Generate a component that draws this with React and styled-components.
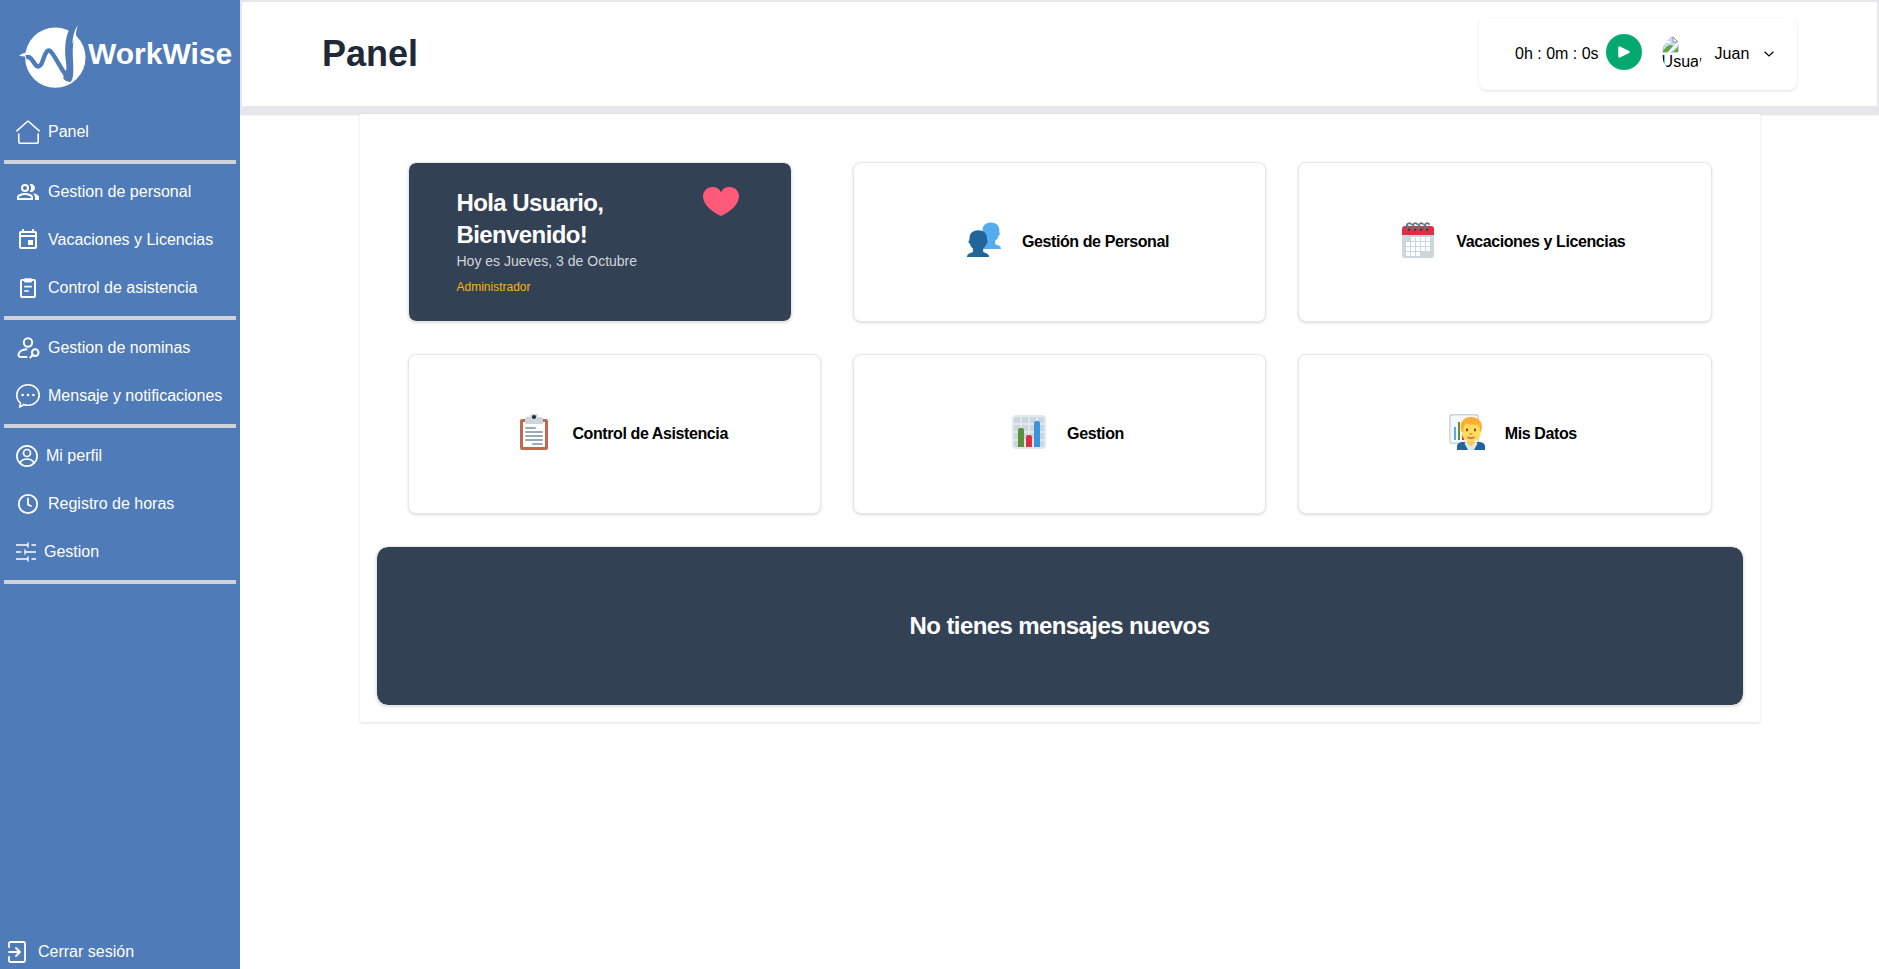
import React from "react";
import styled, { createGlobalStyle, css } from "styled-components";

const BLUE = "#4f7bb8";

const GlobalStyle = createGlobalStyle`
  *, *::before, *::after { box-sizing: border-box; }
  body {
    margin: 0;
    background: #fff;
    color: #000;
    font-family: "Liberation Sans", Arial, sans-serif;
    font-size: 16px;
    line-height: 24px;
    overflow: hidden;
  }
  h1, h2, p { margin: 0; }
  svg { display: block; flex: none; }
`;

const Layout = styled.div`
  display: flex;
  height: 100vh;
`;

const Sidebar = styled.aside`
  display: flex;
  flex-direction: column;
  flex: none;
  width: 240px;
  background: ${BLUE};
  color: #fff;
`;

const Brand = styled.div`
  display: flex;
  align-items: center;
  height: 104px;
  padding: 10px 0 0 18px;
`;

const BrandName = styled.span`
  margin: -6px 0 0 -1px;
  font-size: 30px;
  line-height: 36px;
  font-weight: 700;
`;

const NavGroup = styled.nav`
  margin: 0 4px;
  padding: 4px 0;
  border-bottom: 4px solid #d1d5db;
`;

const NavItem = styled.a`
  display: flex;
  align-items: center;
  gap: 8px;
  height: 48px;
  padding-left: 12px;
  white-space: nowrap;
`;

const Logout = styled.a`
  display: flex;
  align-items: center;
  gap: 12px;
  margin-top: auto;
  padding: 0 0 5px 8px;
`;

const Content = styled.div`
  flex: 1;
  min-width: 0;
`;

const Header = styled.header`
  display: flex;
  align-items: center;
  justify-content: space-between;
  height: 115px;
  padding: 0 80px 0 80px;
  border: 2px solid #e5e7eb;
  border-bottom-width: 9px;
  background: #fff;
  box-shadow: 0 1px 2px rgba(0, 0, 0, 0.05);
`;

const Title = styled.h1`
  color: #1f2937;
  font-size: 36px;
  line-height: 40px;
  font-weight: 700;
`;

const Controls = styled.div`
  display: flex;
  align-items: center;
  width: 318px;
  height: 72px;
  padding-left: 36px;
  border-radius: 8px;
  background: #fff;
  box-shadow: 0 1px 3px rgba(0, 0, 0, 0.12);
`;

const PlayButton = styled.button`
  display: grid;
  place-items: center;
  width: 36px;
  height: 36px;
  margin: 0 20px 4px 7px;
  padding: 0;
  border: 0;
  border-radius: 50%;
  background: #04a96f;
`;

const Avatar = styled.div`
  width: 40px;
  height: 40px;
  margin-right: 13px;
  padding-top: 2px;
  border-radius: 50%;
  overflow: hidden;
  line-height: 18px;
  white-space: nowrap;
`;

const UserName = styled.span`
  width: 49px;
`;

const Board = styled.main`
  position: relative;
  width: 1400px;
  margin: -1px auto 0;
  padding: 16px;
  background: #fff;
  box-shadow: 0 1px 3px rgba(0, 0, 0, 0.13);
`;

const Grid = styled.section`
  display: grid;
  grid-template-columns: repeat(3, 1fr);
  gap: 32px;
  padding: 32px;
`;

const cardFrame = css`
  height: 160px;
  border: 1px solid #e5e7eb;
  border-radius: 8px;
  box-shadow: 0 1px 3px rgba(0, 0, 0, 0.14);
`;

const Card = styled.article`
  ${cardFrame}
  display: flex;
  align-items: center;
  justify-content: center;
  background: #fff;

  & > svg { margin: 0 20px 4px 16px; }
`;

const CardLabel = styled.span`
  font-weight: 700;
  letter-spacing: -0.025em;
`;

const Welcome = styled.article`
  ${cardFrame}
  display: flex;
  justify-content: space-between;
  width: 384px;
  padding: 24px 52px 0 48px;
  background: #334155;
  background-clip: padding-box;
`;

const Greeting = styled.h2`
  color: #fff;
  font-size: 24px;
  line-height: 32px;
  font-weight: 700;
  letter-spacing: -0.025em;
`;

const Today = styled.p`
  color: #d1d5db;
  font-size: 14px;
  line-height: 20px;
`;

const Role = styled.p`
  margin-top: 8px;
  color: #f5b50b;
  font-size: 12px;
  line-height: 16px;
`;

const Messages = styled.section`
  ${cardFrame}
  display: flex;
  align-items: center;
  justify-content: center;
  border-radius: 12px;
  background: #334155;
  background-clip: padding-box;
  color: #fff;
  font-size: 24px;
  line-height: 32px;
  font-weight: 700;
  letter-spacing: -0.025em;
`;

const Line = ({ size = 24, weight = 2, children }) => (
  <svg width={size} height={size} viewBox={`0 0 ${size} ${size}`} fill="none" stroke="#fff"
    strokeWidth={weight} strokeLinecap="round" strokeLinejoin="round">{children}</svg>
);

const Logo = () => (
  <svg width="71" height="68" viewBox="54 68 213 204">
    <circle cx="166" cy="172" r="90.5" fill="#fff" />
    <path d="M57 166Q72 156 92 156L88 172Q73 167 57 166Z" fill="#fff" />
    <path d="M78 171C93 166 97 182 107 194C113 201 120 200 125 189C132 172 138 147 149 151C162 158 184 212 207 236"
      fill="none" stroke={BLUE} strokeWidth="13" />
    <path d="M206 91C194 118 194 154 198 184C200 203 201 212 192 216L190 235Q201 247 211 245C221 239 221 211 219 178C217 140 220 106 232 94L235 68Z" fill={BLUE} />
    <path d="M234 74C222 91 218 110 217 130L229 107C226 98 230 86 234 74Z" fill="#fff" />
  </svg>
);

const HomeIcon = () => (
  <Line weight={1.6}>
    <path d="M.8 10.8L12 1l11.2 9.8M2.8 14v8q0 1.2 1.2 1.2h17q1.2 0 1.2-1.2V14" />
  </Line>
);

const PeopleIcon = () => (
  <svg width="24" height="24" viewBox="0 0 24 24" fill="#fff">
    <path d="M16.67 13.13C18.04 14.06 19 15.32 19 17v3h4v-3c0-2.18-3.57-3.47-6.33-3.87zM15 12c2.21 0 4-1.79 4-4s-1.79-4-4-4c-.47 0-.91.1-1.33.24a5.98 5.98 0 0 1 0 7.52c.42.14.86.24 1.33.24z" />
    <path fillRule="evenodd" d="M9 4a4 4 0 1 0 0 8 4 4 0 0 0 0-8zm0 6a2 2 0 1 1 0-4 2 2 0 0 1 0 4zM9 13c-2.67 0-8 1.34-8 4v3h16v-3c0-2.66-5.33-4-8-4zm6 5H3v-.99C3.2 16.29 6.3 15 9 15s5.8 1.29 6 2v1z" />
  </svg>
);

const EventIcon = () => (
  <svg width="24" height="24" viewBox="0 0 24 24" fill="#fff">
    <path fillRule="evenodd" d="M19 3h-1V1h-2v2H8V1H6v2H5a2 2 0 0 0-2 2v14a2 2 0 0 0 2 2h14a2 2 0 0 0 2-2V5a2 2 0 0 0-2-2zm0 16H5V9h14v10zm0-12H5V5h14v2zM12 12h5v5h-5z" />
  </svg>
);

const ClipboardIcon = () => (
  <Line>
    <rect x="5" y="4" width="14" height="17" rx="1" />
    <path d="M9 3h6v2.6H9zM9 10.7h6M9 15h3" strokeLinecap="square" strokeWidth="1.7" />
  </Line>
);

const PayrollIcon = () => (
  <Line>
    <circle cx="12" cy="6.5" r="4.2" />
    <path d="M10.5 13.2C6.5 13.4 3 15.6 2.5 18.4q-.3 2.6 2.7 2.7h5.3M17 18.8l-2.7 2.7" />
    <circle cx="19.2" cy="16.6" r="3.3" />
  </Line>
);

const ChatIcon = () => (
  <Line weight={1.6}>
    <path d="M4.3 18.8A10.2 10.2 0 0 1 .8 11C.8 5.3 5.8.8 12 .8S23.2 5.3 23.2 11 18.2 21.2 12 21.2q-2.4 0-4.5-.8Q6 22.4 3.5 23.1q1.1-2.2.8-4.3z" />
    <g fill="#fff" stroke="none">
      <circle cx="6.6" cy="11" r="1.35" /><circle cx="12" cy="11" r="1.35" /><circle cx="17.4" cy="11" r="1.35" />
    </g>
  </Line>
);

const ProfileIcon = () => (
  <Line size={22} weight={1.7}>
    <circle cx="11" cy="11" r="10.1" /><circle cx="11" cy="8" r="3.5" />
    <path d="M3.9 17.8C5.6 15.3 8.1 14 11 14s5.4 1.3 7.1 3.8" />
  </Line>
);

const ClockIcon = () => (
  <Line weight={1.8}>
    <circle cx="12" cy="12" r="9.2" /><path d="M12 6.5v6.2l3 1.3" />
  </Line>
);

const TuneIcon = () => (
  <Line size={20} weight={1.4}>
    <path strokeLinecap="butt" d="M0 3h12.5M12 .5v5M15.5 3H20M0 10h5.5M9 7.5v5M9 10h11M0 17h12.5M12 14.5v5M15.5 17H20" />
  </Line>
);

const LogoutIcon = () => (
  <svg width="18" height="24" viewBox="0 0 18 24" fill="none" stroke="#fff" strokeWidth="1.8" strokeLinecap="round" strokeLinejoin="round">
    <path d="M1 7V3.5q0-1.5 1.5-1.5h13Q17 2 17 3.5v17q0 1.5-1.5 1.5h-13Q1 22 1 20.5V17M1 12h10.5M8 8l4 4-4 4" />
  </svg>
);

const BrokenImage = () => (
  <svg width="17" height="17" viewBox="0 0 17 17">
    <path d="M1 1h10l5 5v10H1z" fill="#c6d8f5" stroke="#a6a6a6" />
    <path d="M11 1v5h5z" fill="#fff" stroke="#8e8e8e" />
    <path d="M3.5 7q0-2 2-2 2-1 2.5 1 1 0 1 1z" fill="#fff" />
    <path d="M1 15q4-6 7-6t3 1l-5 6H1zM11 16l5-5v5z" fill="#5bae3c" />
    <path d="M5 17L17 5v3L8 17z" fill="#fff" />
  </svg>
);

const Heart = () => (
  <svg width="36" height="29" viewBox="0 0 36 29">
    <path d="M18 5.2C19.6 1.8 22.6 0 26.5 0 32 0 36 4.2 36 9.5c0 7.6-8.5 15.3-18 19.5C8.5 24.8 0 17.1 0 9.5 0 4.2 4 0 9.5 0 13.4 0 16.4 1.8 18 5.2z" fill="#ff5a79" />
  </svg>
);

const Emoji = ({ children }) => <svg width="36" height="36" viewBox="0 0 36 36">{children}</svg>;

const BustsEmoji = () => (
  <Emoji>
    <path fill="#55acee" d="M16.5 8.5C16.5 3.2 20 .4 25 .4s8.3 2.8 8.3 7.7l-.1 2.2c1 .3.8 2.7-.5 3.1-.6 2.5-1.8 4.2-3.5 5.2V22c1.5 1.3 5.800 1.200 5.800 5H17z" />
    <path fill="#269" d="M3.5 16.5c0-5.3 3.7-8.2 8.8-8.2s8.7 2.8 8.7 8.2v1.8c1.2.3.9 2.9-.5 3.3-.6 2.2-1.8 3.9-3.3 4.9v3.2c1.5 1.6 5.8 1 5.8 5.3H1c0-4.3 4.4-3.7 6-5.3v-3.2c-1.5-1-2.7-2.7-3.2-4.9-1.500-.4-1.700-3-.5-3.300z" />
  </Emoji>
);

const CalendarEmoji = () => (
  <Emoji>
    <path d="M2 11h32v22a3 3 0 0 1-3 3H5a3 3 0 0 1-3-3z" fill="#ccd6dd" />
    <path d="M5 4h26a3 3 0 0 1 3 3v6H2V7a3 3 0 0 1 3-3z" fill="#dd2e44" />
    <path d="M11 15h4v4h-4zM16 15h4v4h-4zM21 15h4v4h-4zM26 15h4v4h-4zM6 20h4v4H6zM11 20h4v4h-4zM16 20h4v4h-4zM21 20h4v4h-4zM26 20h4v4h-4zM6 25h4v4H6zM11 25h4v4h-4zM16 25h4v4h-4zM21 25h4v4h-4zM26 25h4v4h-4zM6 30h4v4H6zM11 30h4v4h-4zM16 30h4v4h-4z" fill="#fff" />
    {[6, 12, 18, 24].map((x) => (
      <g key={x} transform={`translate(${x} 0)`}>
        <path d="M5.5 2.8C4.2.4 1 .7.5 4 .3 7 1 7.500 2.500 7.800" fill="none" stroke="#66757f" strokeWidth="1.8" />
        <path d="M.8 3.5q2 .5 2.4 4" fill="none" stroke="#66757f" strokeWidth="1.5" />
        <circle cx="3" cy="7.7" r="1.2" fill="#292f33" opacity=".75" />
      </g>
    ))}
  </Emoji>
);

const ClipboardEmoji = () => (
  <Emoji>
    <rect x="4" y="5" width="28" height="31" rx="2" fill="#c1694f" />
    <path d="M7 8h22v25H7z" fill="#fff" />
    <path d="M9 5a2 2 0 0 1 2-2h3a4 4 0 0 1 8 0h3a2 2 0 0 1 2 2v5H9z" fill="#ccd6dd" />
    <circle cx="18" cy="3" r="2.1" fill="#292f33" />
    <path d="M10 14h9M10 18h16M10 22h16M10 26h16M17 30h9" stroke="#99aab5" strokeWidth="2" strokeLinecap="round" />
  </Emoji>
);

const ChartEmoji = () => (
  <Emoji>
    <rect x="1" y="1" width="34" height="34" rx="4" fill="#e1e8ed" />
    <path fill="#ccd6dd" d="M5 3h4v6H3V5q0-2 2-2zM11 3h6v6h-6zM19 3h6v6h-6zM27 3h4q2 0 2 2v4h-6zM3 11h6v6H3zM11 11h6v6h-6zM19 11h6v6h-6zM27 11h6v6h-6zM3 19h6v6H3zM11 19h6v6h-6zM19 19h6v6h-6zM27 19h6v6h-6zM3 27h6v6H5q-2 0-2-2zM27 27h6v4q0 2-2 2h-4z" />
    <path fill="#5c913b" d="M13 33H7V16a2 2 0 0 1 2-2h2a2 2 0 0 1 2 2z" />
    <path fill="#dd2e44" d="M21 33h-6V23a2 2 0 0 1 2-2h2a2 2 0 0 1 2 2z" />
    <path fill="#3b94d9" d="M29 33h-6V9a2 2 0 0 1 2-2h2a2 2 0 0 1 2 2z" />
  </Emoji>
);

const WorkerEmoji = () => (
  <Emoji>
    <rect x=".8" y=".8" width="28.5" height="28.5" rx="2.5" fill="#f5f8fa" stroke="#ccd6dd" strokeWidth="1.6" />
    <path d="M6 26V13" stroke="#55acee" strokeWidth="2" />
    <path d="M10 26V8" stroke="#5c913b" strokeWidth="2" />
    <path d="M14 26v-5" stroke="#dd2e44" strokeWidth="2" />
    <path d="M8 36v-3.5Q8 28.5 13 28h18q5 .5 5 4.5V36z" fill="#269" />
    <path d="M16.5 28h11L22 34z" fill="#f9ca55" />
    <path d="M17 27.5l5 5 5-5 1.5 2L25 36h-6l-3.5-6.5z" fill="#e1e8ed" />
    <path d="M18.5 24h7v4.5L22 31l-3.5-2.5z" fill="#f9ca55" />
    <path d="M13 13Q13 6 22 6t10 7v4q-.4 10.5-10 10.5T13 17z" fill="#ffdc5d" />
    <path d="M12 16.5C10 8 15 2.5 22.5 3 29.5 3.3 34.5 8 32.5 16.5q-.7 1.5-1.3 1.5 0-5-2.7-7.5-5 .8-11.5-1-2.5 2.5-2.8 8.5-1.6.5-2.2-1.5z" fill="#ffac33" />
    <ellipse cx="18" cy="16" rx=".9" ry="1.4" fill="#662113" />
    <ellipse cx="26" cy="16" rx=".9" ry="1.4" fill="#662113" />
    <path d="M21 20h2" stroke="#c1694f" strokeWidth="1.2" strokeLinecap="round" />
    <path d="M18 23q4 1.5 8 0-4 3.5-8 0z" fill="#c1694f" stroke="#c1694f" strokeWidth=".7" />
  </Emoji>
);

const navGroups = [
  [["Panel", HomeIcon]],
  [["Gestion de personal", PeopleIcon], ["Vacaciones y Licencias", EventIcon], ["Control de asistencia", ClipboardIcon]],
  [["Gestion de nominas", PayrollIcon], ["Mensaje y notificaciones", ChatIcon]],
  [["Mi perfil", ProfileIcon], ["Registro de horas", ClockIcon], ["Gestion", TuneIcon]],
];

const cards = [
  ["Gestión de Personal", BustsEmoji],
  ["Vacaciones y Licencias", CalendarEmoji],
  ["Control de Asistencia", ClipboardEmoji],
  ["Gestion", ChartEmoji],
  ["Mis Datos", WorkerEmoji],
];

export default function App() {
  return (
    <Layout>
      <GlobalStyle />
      <Sidebar>
        <Brand><Logo /><BrandName>WorkWise</BrandName></Brand>
        {navGroups.map((items) => (
          <NavGroup key={items[0][0]}>
            {items.map(([label, Icon]) => (
              <NavItem key={label}><Icon />{label}</NavItem>
            ))}
          </NavGroup>
        ))}
        <Logout><LogoutIcon />Cerrar sesión</Logout>
      </Sidebar>
      <Content>
        <Header>
          <Title>Panel</Title>
          <Controls>
            <span>0h : 0m : 0s</span>
            <PlayButton aria-label="Iniciar">
              <svg width="14" height="14" viewBox="0 0 14 14">
                <path d="M2.5 2.5v9L11.5 7z" fill="#fff" stroke="#fff" strokeWidth="2.5" strokeLinejoin="round" />
              </svg>
            </PlayButton>
            <Avatar><BrokenImage />Usuario</Avatar>
            <UserName>Juan</UserName>
            <svg width="10" height="6" viewBox="0 0 10 6">
              <path d="M.6.8L5 4.9 9.4.8" fill="none" stroke="#000" strokeWidth="1.2" />
            </svg>
          </Controls>
        </Header>
        <Board>
          <Grid>
            <Welcome>
              <div>
                <Greeting>Hola Usuario,<br />Bienvenido!</Greeting>
                <Today>Hoy es Jueves, 3 de Octubre</Today>
                <Role>Administrador</Role>
              </div>
              <Heart />
            </Welcome>
            {cards.map(([label, Icon]) => (
              <Card key={label}><Icon /><CardLabel>{label}</CardLabel></Card>
            ))}
          </Grid>
          <Messages>No tienes mensajes nuevos</Messages>
        </Board>
      </Content>
    </Layout>
  );
}
